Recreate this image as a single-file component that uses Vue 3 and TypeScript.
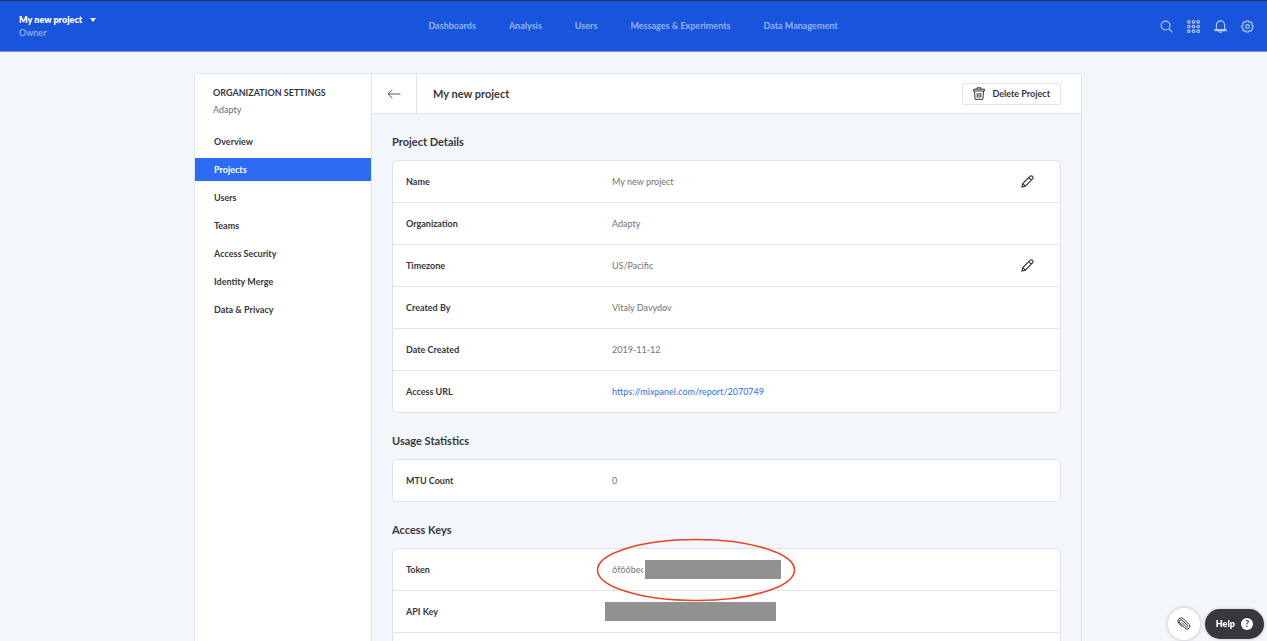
<script setup lang="ts">
interface Row {
  label: string
  value?: string
  href?: string
  editable?: boolean
  kind?: 'token' | 'key'
}
interface Section {
  title: string
  rows: Row[]
}

const navItems: string[] = ['Dashboards', 'Analysis', 'Users', 'Messages & Experiments', 'Data Management']
const menuItems: string[] = ['Overview', 'Projects', 'Users', 'Teams', 'Access Security', 'Identity Merge', 'Data & Privacy']
const activeItem = 'Projects'

const sections: Section[] = [
  {
    title: 'Project Details',
    rows: [
      { label: 'Name', value: 'My new project', editable: true },
      { label: 'Organization', value: 'Adapty' },
      { label: 'Timezone', value: 'US/Pacific', editable: true },
      { label: 'Created By', value: 'Vitaly Davydov' },
      { label: 'Date Created', value: '2019-11-12' },
      { label: 'Access URL', value: 'https://mixpanel.com/report/2070749', href: '#report' },
    ],
  },
  { title: 'Usage Statistics', rows: [{ label: 'MTU Count', value: '0' }] },
  {
    title: 'Access Keys',
    rows: [
      { label: 'Token', value: '6f66bec', kind: 'token' },
      { label: 'API Key', kind: 'key' },
      { label: '' },
    ],
  },
]

const dots: number[] = [2, 7, 12]
</script>

<template>
  <div class="app">
    <header class="topbar">
      <div class="project">
        <button class="project-switch" type="button">
          <span>My new project</span>
          <svg width="6" height="4" viewBox="0 0 6 4"><path d="M0 0h6L3 4z" fill="currentColor" /></svg>
        </button>
        <span class="role">Owner</span>
      </div>
      <nav class="nav">
        <a v-for="item in navItems" :key="item" href="#">{{ item }}</a>
      </nav>
      <div class="tools">
        <button type="button" aria-label="Search">
          <svg viewBox="0 0 14 14"><circle cx="6" cy="6" r="4.8" /><path d="M9.4 9.4l4 4" /></svg>
        </button>
        <button type="button" aria-label="Apps">
          <svg viewBox="0 0 14 14">
            <template v-for="y in dots" :key="y">
              <circle v-for="x in dots" :key="x" :cx="x" :cy="y" r="1.4" />
            </template>
          </svg>
        </button>
        <button type="button" aria-label="Notifications">
          <svg viewBox="0 0 14 14"><path d="M2.6 10V5.4a4.4 4.4 0 0 1 8.800 0V10M1 10.200h12v1.300H1zM5.400 11.800a1.600 1.600 0 0 0 3.200 0" /></svg>
        </button>
        <button type="button" aria-label="Settings">
          <svg viewBox="0 0 14 14">
            <path d="M5.8 1.9 6.2.8h1.6l.4 1.1 1.2.5 1.1-.5 1.600 1.600-.5 1.100.5 1.200 1.100.4v1.600l-1.100.4-.5 1.200.5 1.100-1.600 1.600-1.100-.5-1.200.5-.4 1.100H6.200l-.4-1.100-1.200-.5-1.100.5-1.600-1.600.5-1.100-.5-1.200L.8 7.800V6.200l1.100-.4.5-1.200-.5-1.100 1.600-1.600 1.100.5z" />
            <circle cx="7" cy="7" r="2" />
          </svg>
        </button>
      </div>
    </header>

    <div class="page">
      <div class="panel">
        <aside class="sidebar">
          <h2>ORGANIZATION SETTINGS</h2>
          <p>Adapty</p>
          <nav class="menu">
            <a v-for="item in menuItems" :key="item" href="#" :class="{ active: item === activeItem }">{{ item }}</a>
          </nav>
        </aside>

        <main class="content">
          <div class="content-head">
            <button class="back" type="button" aria-label="Back">
              <svg width="14" height="12" viewBox="0 0 14 12"><path d="M13.5 6H1M5.4 1.8L1 6l4.4 4.2" /></svg>
            </button>
            <h1>My new project</h1>
            <button class="delete" type="button">
              <svg width="12" height="13" viewBox="0 0 12 13">
                <path d="M4 2V.8h4V2M.6 2.200h10.800v1.800H.6zM1.500 4l.6 8.300h7.800l.6-8.300M4.200 6v4.600M6 6v4.600M7.800 6v4.600" />
              </svg>
              <span>Delete Project</span>
            </button>
          </div>

          <section v-for="section in sections" :key="section.title" class="section">
            <h3>{{ section.title }}</h3>
            <div class="card">
              <table>
                <tbody>
                  <tr v-for="row in section.rows" :key="row.label">
                    <th scope="row">{{ row.label }}</th>
                    <td>
                      <div class="value">
                        <a v-if="row.href" :href="row.href">{{ row.value }}</a>
                        <span v-else-if="row.value" :class="{ clipped: row.kind }">{{ row.value }}</span>
                        <span v-if="row.kind" class="mask" :class="row.kind"></span>
                        <svg v-if="row.kind === 'token'" class="ring" viewBox="0 0 200 64">
                          <ellipse cx="100" cy="32" rx="98.5" ry="30.5" />
                        </svg>
                      </div>
                    </td>
                    <td class="action">
                      <button v-if="row.editable" type="button" :aria-label="'Edit ' + row.label">
                        <svg width="13" height="13" viewBox="0 0 13 13">
                          <path d="M1 12l.8-3.400L9 1.400a1.700 1.700 0 0 1 2.500 0 1.700 1.700 0 0 1 0 2.500L4.300 11.200zM7.800 2.600l2.500 2.500M1.800 8.600l2.500 2.600" />
                        </svg>
                      </button>
                    </td>
                  </tr>
                </tbody>
              </table>
            </div>
          </section>
        </main>
      </div>
    </div>

    <div class="floating">
      <button class="clip" type="button" aria-label="Attachments">
        <svg width="14" height="14" viewBox="0 0 14 14">
          <path d="M4.600 5.200l4.600 4.600a.9.9 0 0 0 1.300-1.300L5.400 3.400a1.800 1.800 0 0 0-2.600 2.600l5.300 5.300a2.700 2.700 0 0 0 3.900-3.900L6.500 1.900A3.200 3.200 0 0 0 1.900 6.500l3.300 3.300" />
        </svg>
      </button>
      <button class="help" type="button">
        <span>Help</span>
        <span class="question">?</span>
      </button>
    </div>
  </div>
</template>

<style>
body {
  margin: 0;
  background: #f3f6fb;
}
</style>

<style scoped>
.app {
  display: flex;
  flex-direction: column;
  height: 100vh;
  overflow: hidden;
  font-family: Lato, "Liberation Sans", sans-serif;
  font-size: 9px;
  line-height: 12px;
  color: #36373c;
  background: #f3f6fb;
}
button {
  padding: 0;
  border: 0;
  background: none;
  font: inherit;
  color: inherit;
  cursor: pointer;
}
a {
  color: inherit;
  text-decoration: none;
}
h1, h2, h3, p {
  margin: 0;
}
svg {
  display: block;
  fill: none;
  stroke: currentColor;
}
.topbar {
  box-sizing: border-box;
  flex: none;
  display: grid;
  grid-template-columns: 1fr auto 1fr;
  align-items: center;
  height: 52px;
  padding: 0 13px 0 12px;
  border-top: 1px solid #20376c;
  border-bottom: 1px solid #6d94ec;
  background: #1955db;
}
.project {
  display: flex;
  flex-direction: column;
  align-items: flex-start;
  gap: 1px;
  padding: 0 7px;
}
.project-switch {
  display: flex;
  align-items: center;
  gap: 8px;
  font-weight: 800;
  color: #fff;
}
.project-switch svg {
  stroke: none;
}
.role {
  font-weight: 500;
  color: #9fbcf5;
}
.nav {
  display: flex;
  gap: 33px;
  font-weight: 700;
  color: #94b3f3;
}
.tools {
  display: flex;
  justify-content: flex-end;
  gap: 14px;
  color: #b4caf6;
}
.tools svg {
  width: 13px;
  height: 13px;
  stroke-width: 1.2;
}
.page {
  flex: 1;
  min-height: 0;
  display: flex;
  padding: 21px 185px 0 194px;
}
.panel {
  flex: 1;
  display: flex;
  border: 1px solid #dfe4ef;
  border-bottom: 0;
  border-radius: 3px 3px 0 0;
}
.sidebar {
  box-sizing: border-box;
  flex: none;
  width: 177px;
  padding-top: 12px;
  border-right: 1px solid #dfe4ef;
  background: #fff;
}
.sidebar h2 {
  padding: 0 18px;
  font-size: 9px;
  line-height: 14px;
  font-weight: 700;
}
.sidebar p {
  padding: 4px 18px 0;
  color: #6b6d78;
}
.menu {
  display: flex;
  flex-direction: column;
  gap: 5px;
  padding-top: 14px;
}
.menu a {
  padding: 0 19px;
  line-height: 23px;
  font-weight: 700;
}
.menu .active {
  background: #2c6cf3;
  color: #fff;
}
.content {
  flex: 1;
  min-width: 0;
}
.content-head {
  display: flex;
  align-items: center;
  height: 39px;
  padding-right: 20px;
  border-bottom: 1px solid #dfe4ef;
  background: #fff;
}
.back {
  display: flex;
  align-items: center;
  justify-content: center;
  align-self: stretch;
  width: 45px;
  border-right: 1px solid #dfe4ef;
  color: #5b5d68;
}
.content-head h1 {
  flex: 1;
  padding-left: 16px;
  font-size: 11px;
  font-weight: 700;
}
.delete {
  display: flex;
  align-items: center;
  gap: 7px;
  height: 22px;
  padding: 0 10px;
  border: 1px solid #dfe4ef;
  border-radius: 2px;
  font-weight: 700;
}
.section {
  padding: 20px 20px 0;
}
.section h3 {
  padding-bottom: 11px;
  font-size: 11px;
  line-height: 15px;
  font-weight: 700;
}
.card {
  border: 1px solid #dce1ec;
  border-radius: 5px;
  background: #fff;
}
table {
  width: 100%;
  border-spacing: 0;
}
th, td {
  box-sizing: border-box;
  height: 42px;
  padding: 0;
  border-bottom: 1px solid #dfe4ef;
}
tr:last-child > * {
  height: 41px;
  border-bottom: 0;
}
th {
  width: 219px;
  padding-left: 13px;
  text-align: left;
  font-weight: 700;
}
td {
  color: #70727d;
}
.value {
  position: relative;
  display: flex;
  align-items: center;
  min-height: 12px;
}
.value a {
  font-weight: 500;
  color: #3b7cf5;
}
.clipped {
  width: 31px;
  overflow: hidden;
}
.action {
  width: 40px;
  padding-right: 26px;
  color: #36373c;
}
.action button {
  display: block;
  margin-left: auto;
}
.action svg {
  stroke-width: 1.2;
}
.mask {
  position: absolute;
  height: 19px;
  background: #919191;
}
.mask.token {
  left: 33px;
  width: 136px;
}
.mask.key {
  left: -7px;
  width: 171px;
}
.ring {
  position: absolute;
  left: -16px;
  width: 200px;
  height: 64px;
  stroke: #ea4427;
  stroke-width: 1.6;
}
.floating {
  position: fixed;
  right: 3px;
  bottom: 1px;
  display: flex;
  align-items: center;
  gap: 5px;
}
.clip {
  display: flex;
  align-items: center;
  justify-content: center;
  width: 32px;
  height: 32px;
  border-radius: 50%;
  background: #fff;
  box-shadow: 0 0 4px rgba(40, 50, 80, 0.3);
}
.help {
  display: flex;
  align-items: center;
  gap: 6px;
  height: 30px;
  padding: 0 11px;
  border-radius: 15px;
  background: #37383c;
  box-shadow: 0 0 3px rgba(40, 50, 80, 0.3);
  color: #fff;
  font-weight: 800;
}
.question {
  width: 12px;
  border-radius: 50%;
  background: #fff;
  color: #37383c;
  font-weight: 900;
  text-align: center;
}
</style>
